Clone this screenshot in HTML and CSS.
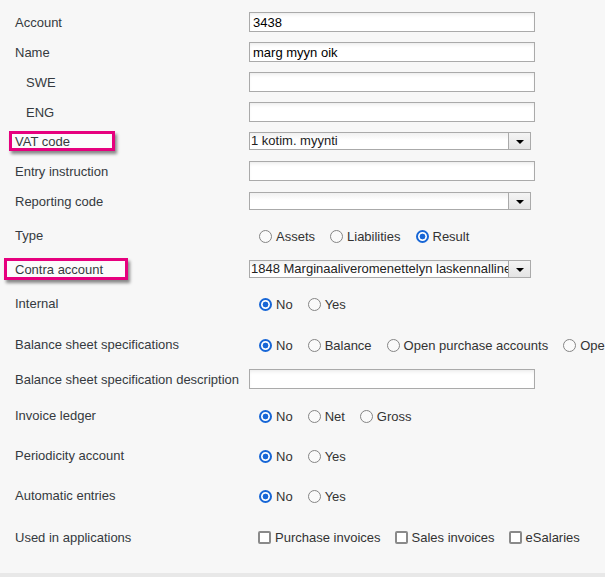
FILE: index.html
```html
<!DOCTYPE html>
<html lang="en">
<head>
<meta charset="utf-8">
<title>Account</title>
<link rel="stylesheet" href="styles.css">
</head>
<body>
<div class="panel">
  <form class="form">
    <div class="row">
      <span class="label">Account</span>
      <input class="text-input" type="text" value="3438">
    </div>
    <div class="row">
      <span class="label">Name</span>
      <input class="text-input" type="text" value="marg myyn oik">
    </div>
    <div class="row">
      <span class="label label--sub">SWE</span>
      <input class="text-input" type="text" value="">
    </div>
    <div class="row">
      <span class="label label--sub">ENG</span>
      <input class="text-input" type="text" value="">
    </div>
    <div class="row row--vat">
      <span class="label label--marked label--marked-vat">VAT code</span>
      <div class="select"><span class="select-value">1 kotim. myynti</span><span class="select-btn"><span class="caret"></span></span></div>
    </div>
    <div class="row">
      <span class="label">Entry instruction</span>
      <input class="text-input" type="text" value="">
    </div>
    <div class="row">
      <span class="label">Reporting code</span>
      <div class="select"><span class="select-value"></span><span class="select-btn"><span class="caret"></span></span></div>
    </div>
    <div class="row row--type">
      <span class="label">Type</span>
      <div class="choices">
        <label class="choice"><input class="radio" type="radio" name="type">Assets</label>
        <label class="choice"><input class="radio" type="radio" name="type">Liabilities</label>
        <label class="choice"><input class="radio" type="radio" name="type" checked>Result</label>
      </div>
    </div>
    <div class="row row--contra">
      <span class="label label--marked label--marked-contra">Contra account</span>
      <div class="select"><span class="select-value">1848 Marginaaliveromenettelyn laskennallinen</span><span class="select-btn"><span class="caret"></span></span></div>
    </div>
    <div class="row row--internal">
      <span class="label">Internal</span>
      <div class="choices">
        <label class="choice"><input class="radio" type="radio" name="internal" checked>No</label>
        <label class="choice"><input class="radio" type="radio" name="internal">Yes</label>
      </div>
    </div>
    <div class="row row--balance">
      <span class="label">Balance sheet specifications</span>
      <div class="choices">
        <label class="choice"><input class="radio" type="radio" name="bss" checked>No</label>
        <label class="choice"><input class="radio" type="radio" name="bss">Balance</label>
        <label class="choice"><input class="radio" type="radio" name="bss">Open purchase accounts</label>
        <label class="choice"><input class="radio" type="radio" name="bss">Open sales accounts</label>
      </div>
    </div>
    <div class="row row--desc">
      <span class="label">Balance sheet specification description</span>
      <input class="text-input" type="text" value="">
    </div>
    <div class="row row--invoice">
      <span class="label">Invoice ledger</span>
      <div class="choices">
        <label class="choice"><input class="radio" type="radio" name="ledger" checked>No</label>
        <label class="choice"><input class="radio" type="radio" name="ledger">Net</label>
        <label class="choice"><input class="radio" type="radio" name="ledger">Gross</label>
      </div>
    </div>
    <div class="row row--wide">
      <span class="label">Periodicity account</span>
      <div class="choices">
        <label class="choice"><input class="radio" type="radio" name="period" checked>No</label>
        <label class="choice"><input class="radio" type="radio" name="period">Yes</label>
      </div>
    </div>
    <div class="row row--wide">
      <span class="label">Automatic entries</span>
      <div class="choices">
        <label class="choice"><input class="radio" type="radio" name="auto" checked>No</label>
        <label class="choice"><input class="radio" type="radio" name="auto">Yes</label>
      </div>
    </div>
    <div class="row row--apps">
      <span class="label">Used in applications</span>
      <div class="choices choices--check">
        <label class="choice"><input class="checkbox" type="checkbox">Purchase invoices</label>
        <label class="choice"><input class="checkbox" type="checkbox">Sales invoices</label>
        <label class="choice"><input class="checkbox" type="checkbox">eSalaries</label>
      </div>
    </div>
  </form>
</div>
</body>
</html>
```
FILE: styles.css
```css
html, body {
  margin: 0;
  padding: 0;
  overflow: hidden;
}

body {
  background: #e8e8e8;
  font-family: "Liberation Sans", Arial, sans-serif;
  font-size: 13px;
  color: #333;
}

.panel {
  background: #f7f7f7;
  height: 573px;
  overflow: hidden;
}

.form {
  padding: 7px 0 0 15px;
}

.row {
  display: grid;
  grid-template-columns: 234px auto;
  align-items: center;
  height: 30px;
  white-space: nowrap;
}

.row--vat { margin-top: -1px; }
.row--type { margin-top: 4px; }
.row--contra { margin-top: 4px; }
.row--internal { margin-top: 4px; }
.row--balance { margin-top: 11px; }
.row--desc { margin-top: 5px; }
.row--invoice { margin-top: 6px; }
.row--wide { margin-top: 10px; }
.row--apps { margin-top: 12px; }

.label {
  display: inline-block;
  line-height: 15px;
  color: #353a40;
}

.label--sub {
  padding-left: 11px;
}

.label--marked {
  position: relative;
  z-index: 0;
}

.label--marked::before {
  content: "";
  position: absolute;
  z-index: -1;
  border: 3px solid #e6007e;
  background: #fbfbfb;
  box-shadow: 2px 3px 3px rgba(0, 0, 0, 0.45);
}

.label--marked-vat::before {
  left: -6px;
  top: -3px;
  width: 100px;
  height: 14px;
}

.label--marked-contra::before {
  left: -11px;
  top: -4px;
  width: 118px;
  height: 16px;
}

.text-input {
  box-sizing: border-box;
  width: 286px;
  height: 20px;
  margin: 0;
  padding: 0 3px;
  border: 1px solid #aaa;
  background: #fff;
  box-shadow: inset 0 3px 4px -2px rgba(0, 0, 0, 0.1);
  font-family: "Liberation Sans", Arial, sans-serif;
  font-size: 13px;
  color: #000;
  outline: none;
}

.select {
  box-sizing: border-box;
  width: 282px;
  height: 18px;
  display: flex;
  border: 1px solid #aaa;
  background: linear-gradient(#f0f0f0, #fff 45%);
}

.select-value {
  flex: 1;
  overflow: hidden;
  padding-left: 1px;
  line-height: 16px;
  color: #222;
}

.select-btn {
  width: 21px;
  display: flex;
  align-items: center;
  justify-content: center;
  border-left: 1px solid #aaa;
  background: linear-gradient(#f4f4f4, #e4e4e4);
}

.caret {
  width: 0;
  height: 0;
  border-left: 4px solid transparent;
  border-right: 4px solid transparent;
  border-top: 4px solid #000;
  margin-top: 1px;
}

.choices {
  display: flex;
  align-items: center;
  padding-left: 10px;
  padding-top: 3px;
}

.choices--check {
  padding-left: 9px;
  padding-top: 0;
}

.choice {
  display: inline-flex;
  align-items: center;
  margin-right: 15px;
  color: #333;
  line-height: 15px;
}

.choices--check .choice {
  margin-right: 14px;
}

.radio {
  appearance: none;
  -webkit-appearance: none;
  box-sizing: border-box;
  width: 13px;
  height: 13px;
  margin: 0 4px 0 0;
  border: 1.5px solid #858585;
  border-radius: 50%;
  background: #fafafa;
}

.radio:checked {
  border: 2px solid #1766d6;
  background: radial-gradient(circle, #1766d6 0 2.6px, #fff 3.2px);
}

.checkbox {
  appearance: none;
  -webkit-appearance: none;
  box-sizing: border-box;
  width: 13px;
  height: 13px;
  margin: 0 4px 0 0;
  border: 2px solid #8a8a8a;
  border-radius: 2px;
  background: #fff;
}
```
